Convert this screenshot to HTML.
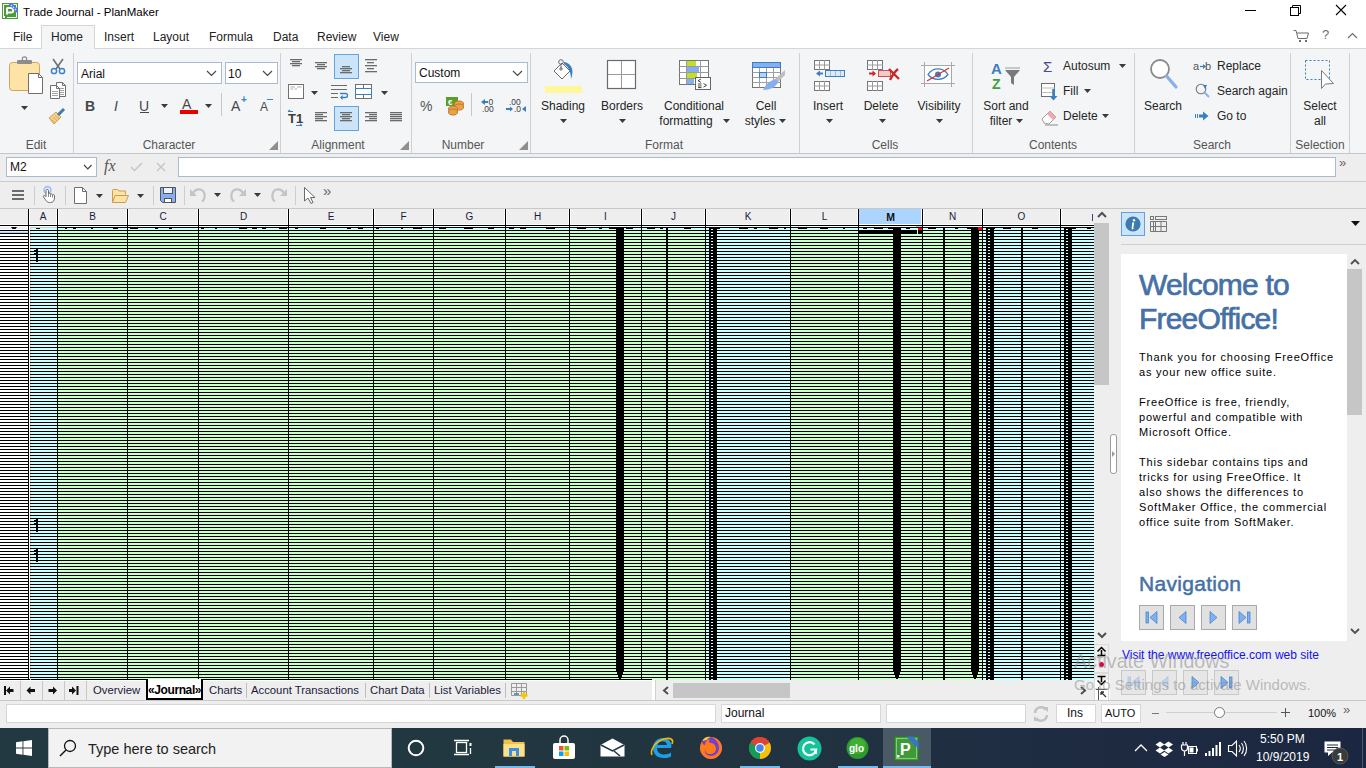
<!DOCTYPE html><html><head><meta charset="utf-8"><style>
html,body{margin:0;padding:0;width:1366px;height:768px;overflow:hidden;background:#fff;position:relative;font-family:"Liberation Sans",sans-serif;}
div{position:absolute;box-sizing:border-box;}
.t{white-space:pre;font-size:11.5px;line-height:14px;color:#222;}
svg{position:absolute;overflow:visible;}
</style></head><body>
<div style="left:0px;top:0px;width:1366px;height:25px;background:#fff"></div>
<div class="t" style="left:23px;top:5px;font-size:11.5px;color:#000">Trade Journal - PlanMaker</div>
<svg style="left:2px;top:3px" width="16" height="16" viewBox="0 0 16 16">
<rect x="0" y="0" width="16" height="16" fill="#4b9b3b"/>
<path d="M1.5 13V1.5H14.5V14.5H5" fill="none" stroke="#fff" stroke-width="1"/>
<rect x="1" y="13" width="2" height="2" fill="#fff"/>
<path d="M5 4.5V11.5M5 5H9A2 2 0 0 1 9 9.5H5.5" fill="none" stroke="#fff" stroke-width="2"/>
<path d="M5.5 0H10L16 6V11Z" fill="#4a7ce8"/>
<path d="M9 2L10 3M11 4L12 5M13 6L14 7" stroke="#dfe8ff" stroke-width="1.2"/>
</svg>
<div style="left:1245px;top:10px;width:11px;height:1px;background:#000"></div>
<svg style="left:1289px;top:4px" width="13" height="12"><rect x="1.5" y="3.5" width="8" height="8" fill="none" stroke="#000"/><path d="M3.5 3.5V1.5H11.5V9.5H9.5" fill="none" stroke="#000"/></svg>
<svg style="left:1335px;top:4px" width="12" height="12"><path d="M1 1L11 11M11 1L1 11" stroke="#000" stroke-width="1.1"/></svg>
<div style="left:0px;top:48px;width:1366px;height:1px;background:#d6d6d6"></div>
<div style="left:41px;top:25px;width:54px;height:24px;background:#f4f5f7;border:1px solid #d6d6d6;border-bottom:none"></div>
<div class="t" style="left:13px;top:30px;font-size:12px;color:#222">File</div>
<div class="t" style="left:51px;top:30px;font-size:12px;color:#222">Home</div>
<div class="t" style="left:104px;top:30px;font-size:12px;color:#222">Insert</div>
<div class="t" style="left:153px;top:30px;font-size:12px;color:#222">Layout</div>
<div class="t" style="left:209px;top:30px;font-size:12px;color:#222">Formula</div>
<div class="t" style="left:273px;top:30px;font-size:12px;color:#222">Data</div>
<div class="t" style="left:317px;top:30px;font-size:12px;color:#222">Review</div>
<div class="t" style="left:373px;top:30px;font-size:12px;color:#222">View</div>
<svg style="left:1293px;top:29px" width="18" height="15"><path d="M0.5 1.5H3L5 9.5H14L15.5 4H4" fill="none" stroke="#6d6d6d" stroke-width="1"/><rect x="6" y="11" width="2" height="2" fill="#6d6d6d"/><rect x="12" y="11" width="2" height="2" fill="#6d6d6d"/></svg>
<div class="t" style="left:1322px;top:28px;font-size:13px;color:#6d6d6d">?</div>
<svg style="left:1347px;top:32px" width="12" height="8"><path d="M1 6L5.5 1.5L10 6" fill="none" stroke="#6d6d6d" stroke-width="1.2"/></svg>
<div style="left:0px;top:49px;width:1366px;height:104px;background:#f4f5f7"></div>
<div style="left:0px;top:153px;width:1366px;height:1px;background:#c6c6c6"></div>
<div style="left:73px;top:53px;width:1px;height:100px;background:#cfd0d2"></div>
<div style="left:280px;top:53px;width:1px;height:100px;background:#cfd0d2"></div>
<div style="left:411px;top:53px;width:1px;height:100px;background:#cfd0d2"></div>
<div style="left:530px;top:53px;width:1px;height:100px;background:#cfd0d2"></div>
<div style="left:799px;top:53px;width:1px;height:100px;background:#cfd0d2"></div>
<div style="left:972px;top:53px;width:1px;height:100px;background:#cfd0d2"></div>
<div style="left:1134px;top:53px;width:1px;height:100px;background:#cfd0d2"></div>
<div style="left:1290px;top:53px;width:1px;height:100px;background:#cfd0d2"></div>
<div style="left:1349px;top:53px;width:1px;height:100px;background:#cfd0d2"></div>
<div class="t" style="left:-24px;top:138px;width:120px;text-align:center;font-size:12px;color:#555">Edit</div>
<div class="t" style="left:109px;top:138px;width:120px;text-align:center;font-size:12px;color:#555">Character</div>
<div class="t" style="left:278px;top:138px;width:120px;text-align:center;font-size:12px;color:#555">Alignment</div>
<div class="t" style="left:403px;top:138px;width:120px;text-align:center;font-size:12px;color:#555">Number</div>
<div class="t" style="left:604px;top:138px;width:120px;text-align:center;font-size:12px;color:#555">Format</div>
<div class="t" style="left:825px;top:138px;width:120px;text-align:center;font-size:12px;color:#555">Cells</div>
<div class="t" style="left:993px;top:138px;width:120px;text-align:center;font-size:12px;color:#555">Contents</div>
<div class="t" style="left:1152px;top:138px;width:120px;text-align:center;font-size:12px;color:#555">Search</div>
<div class="t" style="left:1260px;top:138px;width:120px;text-align:center;font-size:12px;color:#555">Selection</div>
<div style="left:0px;top:154px;width:1366px;height:27px;background:#eeeeee"></div>
<div style="left:0px;top:181px;width:1366px;height:1px;background:#cbcbcb"></div>
<div style="left:6px;top:157px;width:91px;height:20px;background:#fff;border:1px solid #a9bad3"></div>
<div class="t" style="left:10px;top:160px;font-size:12px;color:#111">M2</div>
<svg style="left:83px;top:164px" width="10" height="7"><path d="M1 1L4.8 5L8.6 1" fill="none" stroke="#444" stroke-width="1.1"/></svg>
<div class="t" style="left:104px;top:159px;font-family:'Liberation Serif';font-size:16px;color:#555"><i>fx</i></div>
<svg style="left:130px;top:162px" width="13" height="10"><path d="M1 5L4.5 8.5L12 1" fill="none" stroke="#c4c4c4" stroke-width="1.4"/></svg>
<svg style="left:156px;top:162px" width="10" height="10"><path d="M1 1L9 9M9 1L1 9" stroke="#c4c4c4" stroke-width="1.2"/></svg>
<div style="left:178px;top:157px;width:1158px;height:20px;background:#fff;border:1px solid #a9bad3"></div>
<div style="left:0px;top:182px;width:1366px;height:26px;background:#eeeeee"></div>
<div style="left:0px;top:208px;width:1366px;height:1px;background:#c8c8c8"></div>
<div style="left:0px;top:209px;width:1094px;height:16px;background:#eeeeee"></div>
<div style="left:0px;top:224px;width:1094px;height:1px;background:#fff"></div>
<div style="left:0px;top:225px;width:1094px;height:1px;background:#000"></div>
<div style="left:0px;top:226px;width:1094px;height:1px;background:#fff"></div>
<div style="left:0px;top:227px;width:28px;height:453px;background:repeating-linear-gradient(to bottom,#000 0px,#000 1px,#ffffff 1px,#ffffff 2px,#ffffff 2px,#ffffff 3px)"></div>
<div style="left:0px;top:226px;width:28px;height:4px;background:#fff"></div>
<div style="left:0px;top:231px;width:28px;height:1px;background:#dcebfd"></div>
<div style="left:0px;top:232px;width:28px;height:1px;background:#aad3fe"></div>
<div style="left:0px;top:227px;width:27px;height:2px;background:#eeeeee"></div>
<svg style="left:11px;top:227px" width="6" height="2"><path d="M0 0H6L4.5 2H1.5Z" fill="#000"/></svg>
<div style="left:28px;top:209px;width:1px;height:471px;background:#000"></div>
<div style="left:29px;top:209px;width:1px;height:16px;background:#fff"></div>
<div style="left:29px;top:226px;width:1px;height:454px;background:#fff"></div>
<div style="left:30px;top:227px;width:27px;height:453px;background:repeating-linear-gradient(to bottom,#000 0px,#000 1px,#ccffff 1px,#ccffff 2px,#ccffff 2px,#ccffff 3px)"></div>
<div style="left:30px;top:228px;width:27px;height:1px;background:#ccffff"></div>
<div style="left:30px;top:229px;width:27px;height:1px;background:#ccffff"></div>
<div class="t" style="left:29px;top:210px;width:28px;text-align:center;font-size:10px;color:#1a1a3a">A</div>
<div style="left:58px;top:227px;width:69px;height:453px;background:repeating-linear-gradient(to bottom,#000 0px,#000 1px,#ccffcc 1px,#ccffcc 2px,#ccffcc 2px,#ccffcc 3px)"></div>
<div style="left:58px;top:228px;width:69px;height:1px;background:#ccffff"></div>
<div style="left:58px;top:229px;width:69px;height:1px;background:#ccffff"></div>
<div style="left:57px;top:209px;width:1px;height:471px;background:#000"></div>
<div style="left:56px;top:209px;width:1px;height:15px;background:#fff"></div>
<div style="left:58px;top:209px;width:1px;height:15px;background:#fff"></div>
<div class="t" style="left:58px;top:210px;width:69px;text-align:center;font-size:10px;color:#1a1a3a">B</div>
<div style="left:128px;top:227px;width:70px;height:453px;background:repeating-linear-gradient(to bottom,#000 0px,#000 1px,#ccffcc 1px,#ccffcc 2px,#ccffcc 2px,#ccffcc 3px)"></div>
<div style="left:128px;top:228px;width:70px;height:1px;background:#ccffff"></div>
<div style="left:128px;top:229px;width:70px;height:1px;background:#ccffff"></div>
<div style="left:127px;top:209px;width:1px;height:471px;background:#000"></div>
<div style="left:126px;top:209px;width:1px;height:15px;background:#fff"></div>
<div style="left:128px;top:209px;width:1px;height:15px;background:#fff"></div>
<div class="t" style="left:128px;top:210px;width:70px;text-align:center;font-size:10px;color:#1a1a3a">C</div>
<div style="left:199px;top:227px;width:89px;height:453px;background:repeating-linear-gradient(to bottom,#000 0px,#000 1px,#ccffcc 1px,#ccffcc 2px,#ccffcc 2px,#ccffcc 3px)"></div>
<div style="left:199px;top:228px;width:89px;height:1px;background:#ccffff"></div>
<div style="left:199px;top:229px;width:89px;height:1px;background:#ccffff"></div>
<div style="left:198px;top:209px;width:1px;height:471px;background:#000"></div>
<div style="left:197px;top:209px;width:1px;height:15px;background:#fff"></div>
<div style="left:199px;top:209px;width:1px;height:15px;background:#fff"></div>
<div class="t" style="left:199px;top:210px;width:89px;text-align:center;font-size:10px;color:#1a1a3a">D</div>
<div style="left:289px;top:227px;width:84px;height:453px;background:repeating-linear-gradient(to bottom,#000 0px,#000 1px,#ccffcc 1px,#ccffcc 2px,#ccffcc 2px,#ccffcc 3px)"></div>
<div style="left:289px;top:228px;width:84px;height:1px;background:#ccffff"></div>
<div style="left:289px;top:229px;width:84px;height:1px;background:#ccffff"></div>
<div style="left:288px;top:209px;width:1px;height:471px;background:#000"></div>
<div style="left:287px;top:209px;width:1px;height:15px;background:#fff"></div>
<div style="left:289px;top:209px;width:1px;height:15px;background:#fff"></div>
<div class="t" style="left:289px;top:210px;width:84px;text-align:center;font-size:10px;color:#1a1a3a">E</div>
<div style="left:374px;top:227px;width:59px;height:453px;background:repeating-linear-gradient(to bottom,#000 0px,#000 1px,#ccffcc 1px,#ccffcc 2px,#ccffcc 2px,#ccffcc 3px)"></div>
<div style="left:374px;top:228px;width:59px;height:1px;background:#ccffff"></div>
<div style="left:374px;top:229px;width:59px;height:1px;background:#ccffff"></div>
<div style="left:373px;top:209px;width:1px;height:471px;background:#000"></div>
<div style="left:372px;top:209px;width:1px;height:15px;background:#fff"></div>
<div style="left:374px;top:209px;width:1px;height:15px;background:#fff"></div>
<div class="t" style="left:374px;top:210px;width:59px;text-align:center;font-size:10px;color:#1a1a3a">F</div>
<div style="left:434px;top:227px;width:71px;height:453px;background:repeating-linear-gradient(to bottom,#000 0px,#000 1px,#ccffcc 1px,#ccffcc 2px,#ccffcc 2px,#ccffcc 3px)"></div>
<div style="left:434px;top:228px;width:71px;height:1px;background:#ccffff"></div>
<div style="left:434px;top:229px;width:71px;height:1px;background:#ccffff"></div>
<div style="left:433px;top:209px;width:1px;height:471px;background:#000"></div>
<div style="left:432px;top:209px;width:1px;height:15px;background:#fff"></div>
<div style="left:434px;top:209px;width:1px;height:15px;background:#fff"></div>
<div class="t" style="left:434px;top:210px;width:71px;text-align:center;font-size:10px;color:#1a1a3a">G</div>
<div style="left:506px;top:227px;width:63px;height:453px;background:repeating-linear-gradient(to bottom,#000 0px,#000 1px,#ccffcc 1px,#ccffcc 2px,#ccffcc 2px,#ccffcc 3px)"></div>
<div style="left:506px;top:228px;width:63px;height:1px;background:#ccffff"></div>
<div style="left:506px;top:229px;width:63px;height:1px;background:#ccffff"></div>
<div style="left:505px;top:209px;width:1px;height:471px;background:#000"></div>
<div style="left:504px;top:209px;width:1px;height:15px;background:#fff"></div>
<div style="left:506px;top:209px;width:1px;height:15px;background:#fff"></div>
<div class="t" style="left:506px;top:210px;width:63px;text-align:center;font-size:10px;color:#1a1a3a">H</div>
<div style="left:570px;top:227px;width:71px;height:453px;background:repeating-linear-gradient(to bottom,#000 0px,#000 1px,#ccffcc 1px,#ccffcc 2px,#ccffcc 2px,#ccffcc 3px)"></div>
<div style="left:570px;top:228px;width:71px;height:1px;background:#ccffff"></div>
<div style="left:570px;top:229px;width:71px;height:1px;background:#ccffff"></div>
<div style="left:569px;top:209px;width:1px;height:471px;background:#000"></div>
<div style="left:568px;top:209px;width:1px;height:15px;background:#fff"></div>
<div style="left:570px;top:209px;width:1px;height:15px;background:#fff"></div>
<div class="t" style="left:570px;top:210px;width:71px;text-align:center;font-size:10px;color:#1a1a3a">I</div>
<div style="left:642px;top:227px;width:63px;height:453px;background:repeating-linear-gradient(to bottom,#000 0px,#000 1px,#ccffcc 1px,#ccffcc 2px,#ccffcc 2px,#ccffcc 3px)"></div>
<div style="left:642px;top:228px;width:63px;height:1px;background:#ccffff"></div>
<div style="left:642px;top:229px;width:63px;height:1px;background:#ccffff"></div>
<div style="left:641px;top:209px;width:1px;height:471px;background:#000"></div>
<div style="left:640px;top:209px;width:1px;height:15px;background:#fff"></div>
<div style="left:642px;top:209px;width:1px;height:15px;background:#fff"></div>
<div class="t" style="left:642px;top:210px;width:63px;text-align:center;font-size:10px;color:#1a1a3a">J</div>
<div style="left:706px;top:227px;width:84px;height:453px;background:repeating-linear-gradient(to bottom,#000 0px,#000 1px,#ccffff 1px,#ccffff 2px,#ccffff 2px,#ccffff 3px)"></div>
<div style="left:706px;top:228px;width:84px;height:1px;background:#ccffff"></div>
<div style="left:706px;top:229px;width:84px;height:1px;background:#ccffff"></div>
<div style="left:705px;top:209px;width:1px;height:471px;background:#000"></div>
<div style="left:704px;top:209px;width:1px;height:15px;background:#fff"></div>
<div style="left:706px;top:209px;width:1px;height:15px;background:#fff"></div>
<div class="t" style="left:706px;top:210px;width:84px;text-align:center;font-size:10px;color:#1a1a3a">K</div>
<div style="left:791px;top:227px;width:67px;height:453px;background:repeating-linear-gradient(to bottom,#000 0px,#000 1px,#ccffcc 1px,#ccffcc 2px,#ccffcc 2px,#ccffcc 3px)"></div>
<div style="left:791px;top:228px;width:67px;height:1px;background:#ccffff"></div>
<div style="left:791px;top:229px;width:67px;height:1px;background:#ccffff"></div>
<div style="left:790px;top:209px;width:1px;height:471px;background:#000"></div>
<div style="left:789px;top:209px;width:1px;height:15px;background:#fff"></div>
<div style="left:791px;top:209px;width:1px;height:15px;background:#fff"></div>
<div class="t" style="left:791px;top:210px;width:67px;text-align:center;font-size:10px;color:#1a1a3a">L</div>
<div style="left:859px;top:227px;width:63px;height:453px;background:repeating-linear-gradient(to bottom,#000 0px,#000 1px,#ccffcc 1px,#ccffcc 2px,#ccffcc 2px,#ccffcc 3px)"></div>
<div style="left:859px;top:228px;width:63px;height:1px;background:#ccffff"></div>
<div style="left:859px;top:229px;width:63px;height:1px;background:#ccffff"></div>
<div style="left:858px;top:209px;width:1px;height:471px;background:#000"></div>
<div style="left:857px;top:209px;width:1px;height:15px;background:#fff"></div>
<div style="left:859px;top:209px;width:1px;height:15px;background:#fff"></div>
<div style="left:859px;top:209px;width:63px;height:15px;background:#abd5fe"></div>
<div class="t" style="left:859px;top:210px;width:63px;text-align:center;font-size:10.5px;font-weight:bold;color:#111">M</div>
<div style="left:923px;top:227px;width:59px;height:453px;background:repeating-linear-gradient(to bottom,#000 0px,#000 1px,#ccffcc 1px,#ccffcc 2px,#ccffcc 2px,#ccffcc 3px)"></div>
<div style="left:923px;top:228px;width:59px;height:1px;background:#ccffff"></div>
<div style="left:923px;top:229px;width:59px;height:1px;background:#ccffff"></div>
<div style="left:922px;top:209px;width:1px;height:471px;background:#000"></div>
<div style="left:921px;top:209px;width:1px;height:15px;background:#fff"></div>
<div style="left:923px;top:209px;width:1px;height:15px;background:#fff"></div>
<div class="t" style="left:923px;top:210px;width:59px;text-align:center;font-size:10px;color:#1a1a3a">N</div>
<div style="left:983px;top:227px;width:77px;height:453px;background:repeating-linear-gradient(to bottom,#000 0px,#000 1px,#ccffff 1px,#ccffff 2px,#ccffff 2px,#ccffff 3px)"></div>
<div style="left:983px;top:228px;width:77px;height:1px;background:#ccffff"></div>
<div style="left:983px;top:229px;width:77px;height:1px;background:#ccffff"></div>
<div style="left:982px;top:209px;width:1px;height:471px;background:#000"></div>
<div style="left:981px;top:209px;width:1px;height:15px;background:#fff"></div>
<div style="left:983px;top:209px;width:1px;height:15px;background:#fff"></div>
<div class="t" style="left:983px;top:210px;width:77px;text-align:center;font-size:10px;color:#1a1a3a">O</div>
<div style="left:1061px;top:227px;width:33px;height:453px;background:repeating-linear-gradient(to bottom,#000 0px,#000 1px,#ccffff 1px,#ccffff 2px,#ccffff 2px,#ccffff 3px)"></div>
<div style="left:1061px;top:228px;width:33px;height:1px;background:#ccffff"></div>
<div style="left:1061px;top:229px;width:33px;height:1px;background:#ccffff"></div>
<div style="left:1060px;top:209px;width:1px;height:471px;background:#000"></div>
<div style="left:1059px;top:209px;width:1px;height:15px;background:#fff"></div>
<div style="left:1061px;top:209px;width:1px;height:15px;background:#fff"></div>
<div style="left:1092px;top:214px;width:1px;height:7px;background:#553388"></div>
<div style="left:0px;top:679px;width:652px;height:1px;background:#000"></div>
<div style="left:0px;top:680px;width:652px;height:1px;background:#fff"></div>
<div style="left:616px;top:227px;width:8px;height:445px;background:#000"></div>
<div style="left:617px;top:672px;width:6px;height:2px;background:#000"></div>
<div style="left:618px;top:675px;width:4px;height:2px;background:#000"></div>
<div style="left:619px;top:678px;width:2px;height:1px;background:#000"></div>
<div style="left:893px;top:227px;width:8px;height:445px;background:#000"></div>
<div style="left:894px;top:672px;width:6px;height:2px;background:#000"></div>
<div style="left:895px;top:675px;width:4px;height:2px;background:#000"></div>
<div style="left:896px;top:678px;width:2px;height:1px;background:#000"></div>
<div style="left:971px;top:227px;width:8px;height:445px;background:#000"></div>
<div style="left:972px;top:672px;width:6px;height:2px;background:#000"></div>
<div style="left:973px;top:675px;width:4px;height:2px;background:#000"></div>
<div style="left:974px;top:678px;width:2px;height:1px;background:#000"></div>
<div style="left:666px;top:227px;width:2px;height:453px;background:#000"></div>
<div style="left:943px;top:227px;width:2px;height:453px;background:#000"></div>
<div style="left:1021px;top:227px;width:2px;height:453px;background:#000"></div>
<div style="left:709px;top:227px;width:8px;height:453px;background:#000"></div>
<div style="left:711px;top:227px;width:2px;height:453px;background:repeating-linear-gradient(to bottom,#000 0px,#000 2px,#ccffff 2px,#ccffff 3px)"></div>
<div style="left:986px;top:227px;width:8px;height:453px;background:#000"></div>
<div style="left:988px;top:227px;width:2px;height:453px;background:repeating-linear-gradient(to bottom,#000 0px,#000 2px,#ccffff 2px,#ccffff 3px)"></div>
<div style="left:1064px;top:227px;width:8px;height:453px;background:#000"></div>
<div style="left:1066px;top:227px;width:2px;height:453px;background:repeating-linear-gradient(to bottom,#000 0px,#000 2px,#ccffff 2px,#ccffff 3px)"></div>
<div style="left:30px;top:227px;width:27px;height:1px;background:#c8c8c8"></div>
<div style="left:36px;top:228px;width:4px;height:1px;background:#000"></div>
<div style="left:65px;top:228px;width:2px;height:1px;background:#000"></div>
<div style="left:73px;top:228px;width:3px;height:1px;background:#000"></div>
<div style="left:91px;top:228px;width:2px;height:1px;background:#000"></div>
<div style="left:113px;top:228px;width:5px;height:1px;background:#000"></div>
<div style="left:130px;top:228px;width:8px;height:1px;background:#000"></div>
<div style="left:155px;top:228px;width:3px;height:1px;background:#000"></div>
<div style="left:169px;top:228px;width:3px;height:1px;background:#000"></div>
<div style="left:201px;top:228px;width:3px;height:1px;background:#000"></div>
<div style="left:215px;top:228px;width:2px;height:1px;background:#000"></div>
<div style="left:239px;top:228px;width:8px;height:1px;background:#000"></div>
<div style="left:252px;top:228px;width:5px;height:1px;background:#000"></div>
<div style="left:262px;top:228px;width:4px;height:1px;background:#000"></div>
<div style="left:279px;top:228px;width:8px;height:1px;background:#000"></div>
<div style="left:295px;top:228px;width:3px;height:1px;background:#000"></div>
<div style="left:320px;top:228px;width:6px;height:1px;background:#000"></div>
<div style="left:347px;top:228px;width:4px;height:1px;background:#000"></div>
<div style="left:358px;top:228px;width:5px;height:1px;background:#000"></div>
<div style="left:376px;top:228px;width:3px;height:1px;background:#000"></div>
<div style="left:401px;top:228px;width:2px;height:1px;background:#000"></div>
<div style="left:413px;top:228px;width:9px;height:1px;background:#000"></div>
<div style="left:439px;top:228px;width:7px;height:1px;background:#000"></div>
<div style="left:464px;top:228px;width:9px;height:1px;background:#000"></div>
<div style="left:488px;top:228px;width:6px;height:1px;background:#000"></div>
<div style="left:509px;top:228px;width:5px;height:1px;background:#000"></div>
<div style="left:520px;top:228px;width:6px;height:1px;background:#000"></div>
<div style="left:546px;top:228px;width:9px;height:1px;background:#000"></div>
<div style="left:577px;top:228px;width:9px;height:1px;background:#000"></div>
<div style="left:599px;top:228px;width:3px;height:1px;background:#000"></div>
<div style="left:609px;top:228px;width:8px;height:1px;background:#000"></div>
<div style="left:626px;top:228px;width:7px;height:1px;background:#000"></div>
<div style="left:647px;top:228px;width:8px;height:1px;background:#000"></div>
<div style="left:660px;top:228px;width:3px;height:1px;background:#000"></div>
<div style="left:684px;top:228px;width:7px;height:1px;background:#000"></div>
<div style="left:713px;top:228px;width:7px;height:1px;background:#000"></div>
<div style="left:739px;top:228px;width:9px;height:1px;background:#000"></div>
<div style="left:754px;top:228px;width:3px;height:1px;background:#000"></div>
<div style="left:769px;top:228px;width:9px;height:1px;background:#000"></div>
<div style="left:784px;top:228px;width:2px;height:1px;background:#000"></div>
<div style="left:798px;top:228px;width:9px;height:1px;background:#000"></div>
<div style="left:820px;top:228px;width:8px;height:1px;background:#000"></div>
<div style="left:843px;top:228px;width:2px;height:1px;background:#000"></div>
<div style="left:863px;top:228px;width:4px;height:1px;background:#000"></div>
<div style="left:874px;top:228px;width:9px;height:1px;background:#000"></div>
<div style="left:888px;top:228px;width:5px;height:1px;background:#000"></div>
<div style="left:906px;top:228px;width:4px;height:1px;background:#000"></div>
<div style="left:928px;top:228px;width:8px;height:1px;background:#000"></div>
<div style="left:955px;top:228px;width:3px;height:1px;background:#000"></div>
<div style="left:967px;top:228px;width:9px;height:1px;background:#000"></div>
<div style="left:989px;top:228px;width:6px;height:1px;background:#000"></div>
<div style="left:1003px;top:228px;width:8px;height:1px;background:#000"></div>
<div style="left:1032px;top:228px;width:6px;height:1px;background:#000"></div>
<div style="left:1068px;top:228px;width:8px;height:1px;background:#000"></div>
<div style="left:1087px;top:228px;width:4px;height:1px;background:#000"></div>
<div style="left:30px;top:227px;width:1px;height:453px;background:repeating-linear-gradient(to bottom,#000 0px,#000 1px,#d6d0d0 1px,#d6d0d0 2px,#d6d0d0 2px,#d6d0d0 3px)"></div>
<div style="left:30px;top:227px;width:27px;height:1px;background:#c8c8c8"></div>
<div style="left:36px;top:248px;width:2px;height:14px;background:#000"></div>
<div style="left:34px;top:250px;width:2px;height:1px;background:#000"></div>
<div style="left:34px;top:253px;width:2px;height:1px;background:#000"></div>
<div style="left:36px;top:518px;width:2px;height:14px;background:#000"></div>
<div style="left:34px;top:520px;width:2px;height:1px;background:#000"></div>
<div style="left:34px;top:523px;width:2px;height:1px;background:#000"></div>
<div style="left:36px;top:548px;width:2px;height:14px;background:#000"></div>
<div style="left:34px;top:550px;width:2px;height:1px;background:#000"></div>
<div style="left:34px;top:553px;width:2px;height:1px;background:#000"></div>
<div style="left:859px;top:230px;width:59px;height:4px;background:#000"></div>
<div style="left:918px;top:230px;width:4px;height:4px;background:#000"></div>
<div style="left:918px;top:228px;width:4px;height:2px;background:#ff0000"></div>
<div style="left:917px;top:230px;width:1px;height:4px;background:#ccffcc"></div>
<div style="left:916px;top:226px;width:6px;height:1px;background:#cccccc"></div>
<div style="left:978px;top:227px;width:4px;height:3px;background:#ff0000"></div>
<div style="left:1094px;top:209px;width:16px;height:471px;background:#eeeeee"></div>
<svg style="left:1097px;top:211px" width="10" height="7"><path d="M1 6L5 2L9 6" fill="none" stroke="#505050" stroke-width="2"/></svg>
<div style="left:1094px;top:223px;width:15px;height:162px;background:#c6c6c6"></div>
<svg style="left:1097px;top:632px" width="10" height="7"><path d="M1 1L5 5L9 1" fill="none" stroke="#505050" stroke-width="2"/></svg>
<div style="left:1094px;top:644px;width:15px;height:13px;border:1px solid #dadada"></div>
<div style="left:1094px;top:657px;width:15px;height:16px;border:1px solid #dadada"></div>
<div style="left:1094px;top:673px;width:15px;height:16px;border:1px solid #dadada"></div>
<div style="left:1094px;top:689px;width:15px;height:12px;border:1px solid #dadada"></div>
<svg style="left:1097px;top:647px" width="9" height="9"><path d="M0.5 4.5L4.5 0.5L8.5 4.5M0.5 8.5H8.5M4.5 3V8" fill="none" stroke="#000" stroke-width="1.5"/></svg>
<div style="left:1099px;top:662px;width:5px;height:5px;background:#e0004a;border-radius:3px"></div>
<svg style="left:1097px;top:676px" width="9" height="9"><path d="M0.5 0.5H8.5M0.5 4.5L4.5 8.5L8.5 4.5M4.5 1V6" fill="none" stroke="#000" stroke-width="1.5"/></svg>
<svg style="left:1096px;top:687px" width="12" height="14"><path d="M2.5 0V13M0 2.5H11" stroke="#555" stroke-width="1"/><path d="M5 5L10 10M5 5V8M5 5H8" stroke="#333" stroke-width="1.3" fill="none"/></svg>
<div style="left:1110px;top:209px;width:256px;height:491px;background:#eeeeee"></div>
<div style="left:1121px;top:212px;width:24px;height:24px;background:#cce4f7;border:1px solid #5ea0e3"></div>
<svg style="left:1125px;top:216px" width="16" height="16"><circle cx="8" cy="8" r="7.6" fill="#3b7bb0"/><path d="M7.2 6.5H9.3L8.2 12.2C8.1 12.8 8.6 12.8 9.4 12.2L9.5 12.6C8.5 13.6 6.4 14 6.7 12.3Z" fill="#fff"/><circle cx="9" cy="4.3" r="1.2" fill="#fff"/></svg>
<svg style="left:1150px;top:216px" width="18" height="17"><rect x="0.5" y="0.5" width="3" height="3" fill="none" stroke="#777"/><rect x="5.5" y="0.5" width="11" height="3" fill="none" stroke="#777"/><path d="M0.5 5.5H16.5V15.5H0.5ZM5.5 5.5V15.5M11 5.5V15.5M0.5 10.5H16.5M3.5 5.5V15.5" fill="none" stroke="#777"/></svg>
<svg style="left:1351px;top:221px" width="10" height="6"><path d="M0 0H9L4.5 5Z" fill="#111"/></svg>
<div style="left:1121px;top:244px;width:245px;height:1px;background:#d0d0d0"></div>
<div style="left:1121px;top:254px;width:241px;height:387px;background:#fff"></div>
<div style="left:1347px;top:254px;width:15px;height:387px;background:#eeeeee"></div>
<svg style="left:1350px;top:258px" width="10" height="7"><path d="M1 6L5 2L9 6" fill="none" stroke="#505050" stroke-width="1.8"/></svg>
<div style="left:1347px;top:269px;width:15px;height:146px;background:#c6c6c6"></div>
<svg style="left:1350px;top:628px" width="10" height="7"><path d="M1 1L5 5L9 1" fill="none" stroke="#505050" stroke-width="1.8"/></svg>
<div style="left:1110px;top:434px;width:7px;height:40px;border:1px solid #9a9a9a;border-radius:3px;background:#fff"></div>
<svg style="left:1112px;top:451px" width="4" height="6"><path d="M0 0L3 3L0 6Z" fill="#999"/></svg>
<div class="t" style="left:1139px;top:268px;font-size:30px;line-height:34px;letter-spacing:-0.8px;-webkit-text-stroke:0.7px #4571a6;color:#4571a6">Welcome to<br>FreeOffice!</div>
<div class="t" style="left:1139px;top:350px;font-size:11px;line-height:15px;letter-spacing:0.8px;color:#000">Thank you for choosing FreeOffice<br>as your new office suite.</div>
<div class="t" style="left:1139px;top:395px;font-size:11px;line-height:15px;letter-spacing:0.8px;color:#000">FreeOffice is free, friendly,<br>powerful and compatible with<br>Microsoft Office.</div>
<div class="t" style="left:1139px;top:455px;font-size:11px;line-height:15px;letter-spacing:0.8px;color:#000">This sidebar contains tips and<br>tricks for using FreeOffice. It<br>also shows the differences to<br>SoftMaker Office, the commercial<br>office suite from SoftMaker.</div>
<div class="t" style="left:1139px;top:571px;font-size:21px;line-height:25px;letter-spacing:0.3px;-webkit-text-stroke:0.5px #4571a6;color:#4571a6">Navigation</div>
<div style="left:1139px;top:605px;width:25px;height:25px;background:#e1e1e1;border:1px solid #a9a9a9"></div>
<div style="left:1170px;top:605px;width:25px;height:25px;background:#e1e1e1;border:1px solid #a9a9a9"></div>
<div style="left:1201px;top:605px;width:25px;height:25px;background:#e1e1e1;border:1px solid #a9a9a9"></div>
<div style="left:1232px;top:605px;width:25px;height:25px;background:#e1e1e1;border:1px solid #a9a9a9"></div>
<svg style="left:1139px;top:605px;opacity:1" width="25" height="25"><rect x="7" y="7" width="2.5" height="11" fill="#7fb0f0" stroke="#3e7cc9" stroke-width="0.7"/><path d="M18 6.5V18.5L11 12.5Z" fill="#7fb0f0" stroke="#3e7cc9" stroke-width="0.7"/></svg>
<svg style="left:1170px;top:605px;opacity:1" width="25" height="25"><path d="M16 6.5V18.5L9 12.5Z" fill="#7fb0f0" stroke="#3e7cc9" stroke-width="0.7"/></svg>
<svg style="left:1201px;top:605px" width="25" height="25"><path d="M9 6.5V18.5L16 12.5Z" fill="#7fb0f0" stroke="#3e7cc9" stroke-width="0.7"/></svg>
<svg style="left:1232px;top:605px" width="25" height="25"><path d="M7 6.5V18.5L14 12.5Z" fill="#7fb0f0" stroke="#3e7cc9" stroke-width="0.7"/><rect x="15.5" y="7" width="2.5" height="11" fill="#7fb0f0" stroke="#3e7cc9" stroke-width="0.7"/></svg>
<div class="t" style="left:1122px;top:648px;font-size:12px;line-height:14px;color:#1010f8">Visit the www.freeoffice.com web site</div>
<div style="left:1121px;top:670px;width:25px;height:25px;background:#e6e6e6;border:1px solid #c8c8c8"></div>
<div style="left:1152px;top:670px;width:25px;height:25px;background:#e6e6e6;border:1px solid #c8c8c8"></div>
<div style="left:1183px;top:670px;width:25px;height:25px;background:#e6e6e6;border:1px solid #c8c8c8"></div>
<div style="left:1214px;top:670px;width:25px;height:25px;background:#e6e6e6;border:1px solid #c8c8c8"></div>
<svg style="left:1121px;top:670px;opacity:0.35" width="25" height="25"><rect x="7" y="7" width="2.5" height="11" fill="#7fb0f0" stroke="#3e7cc9" stroke-width="0.7"/><path d="M18 6.5V18.5L11 12.5Z" fill="#7fb0f0" stroke="#3e7cc9" stroke-width="0.7"/></svg>
<svg style="left:1152px;top:670px;opacity:0.35" width="25" height="25"><path d="M16 6.5V18.5L9 12.5Z" fill="#7fb0f0" stroke="#3e7cc9" stroke-width="0.7"/></svg>
<svg style="left:1183px;top:670px" width="25" height="25"><path d="M9 6.5V18.5L16 12.5Z" fill="#7fb0f0" stroke="#3e7cc9" stroke-width="0.7"/></svg>
<svg style="left:1214px;top:670px" width="25" height="25"><path d="M7 6.5V18.5L14 12.5Z" fill="#7fb0f0" stroke="#3e7cc9" stroke-width="0.7"/><rect x="15.5" y="7" width="2.5" height="11" fill="#7fb0f0" stroke="#3e7cc9" stroke-width="0.7"/></svg>
<div style="left:0px;top:681px;width:1094px;height:19px;background:#eeeeee"></div>
<div style="left:0px;top:700px;width:1366px;height:1px;background:#c9c9c9"></div>
<div style="left:20px;top:681px;width:1px;height:19px;background:#c8c8c8"></div>
<div style="left:42px;top:681px;width:1px;height:19px;background:#c8c8c8"></div>
<div style="left:64px;top:681px;width:1px;height:19px;background:#c8c8c8"></div>
<div style="left:86px;top:681px;width:1px;height:19px;background:#c8c8c8"></div>
<svg style="left:4px;top:686px" width="10" height="9"><rect x="0" y="0" width="2" height="9" fill="#111"/><path d="M2 4.5L6 0.5V3H9.5V6H6V8.5Z" fill="#111"/></svg>
<svg style="left:26px;top:686px" width="10" height="9"><path d="M0.5 4.5L4.5 0.5V3H9V6H4.5V8.5Z" fill="#111"/></svg>
<svg style="left:48px;top:686px" width="10" height="9"><path d="M9 4.5L5 0.5V3H0.5V6H5V8.5Z" fill="#111"/></svg>
<svg style="left:69px;top:686px" width="10" height="9"><path d="M7 4.5L3 0.5V3H0V6H3V8.5Z" fill="#111"/><rect x="7.5" y="0" width="2" height="9" fill="#111"/></svg>
<div class="t" style="left:93px;top:683px;font-size:11.3px;line-height:14px;color:#1a1a3a">Overview</div>
<div style="left:146px;top:679px;width:57px;height:21px;background:#fff;border:2px solid #000;border-top:none"></div>
<div class="t" style="left:148px;top:683px;font-size:12px;line-height:14px;font-weight:bold;color:#000;letter-spacing:-0.4px">«Journal»</div>
<div class="t" style="left:209px;top:683px;font-size:11.3px;line-height:14px;color:#1a1a3a">Charts</div>
<div style="left:246px;top:683px;width:1px;height:15px;background:#bdbdbd"></div>
<div class="t" style="left:251px;top:683px;font-size:11.3px;line-height:14px;color:#1a1a3a">Account Transactions</div>
<div style="left:365px;top:683px;width:1px;height:15px;background:#bdbdbd"></div>
<div class="t" style="left:370px;top:683px;font-size:11.3px;line-height:14px;color:#1a1a3a">Chart Data</div>
<div style="left:429px;top:683px;width:1px;height:15px;background:#bdbdbd"></div>
<div class="t" style="left:434px;top:683px;font-size:11.3px;line-height:14px;color:#1a1a3a">List Variables</div>
<div style="left:505px;top:683px;width:1px;height:15px;background:#bdbdbd"></div>
<svg style="left:511px;top:683px" width="18" height="17"><path d="M0.5 0.5H15.5V12.5H0.5ZM0.5 4.5H15.5M0.5 8.5H15.5M5.5 0.5V12.5M10.5 0.5V12.5" fill="none" stroke="#9a9a9a"/><path d="M3 11H8" stroke="#3a7fc6" stroke-width="1.5"/><path d="M13 9V16M9.5 12.5H16.5" stroke="#f7c400" stroke-width="2.5"/></svg>
<div style="left:652px;top:680px;width:3px;height:20px;background:#fff"></div>
<div style="left:655px;top:680px;width:1px;height:20px;background:#d0d0d0"></div>
<div style="left:656px;top:680px;width:438px;height:20px;background:#eeeeee"></div>
<svg style="left:662px;top:686px" width="8" height="9"><path d="M6 1L2 4.5L6 8" fill="none" stroke="#505050" stroke-width="2"/></svg>
<div style="left:673px;top:683px;width:117px;height:15px;background:#c6c6c6"></div>
<svg style="left:1079px;top:686px" width="8" height="9"><path d="M2 1L6 4.5L2 8" fill="none" stroke="#505050" stroke-width="2"/></svg>
<div style="left:0px;top:701px;width:1366px;height:27px;background:#eeeeee"></div>
<div style="left:6px;top:704px;width:710px;height:19px;background:#fff;border:1px solid #d7d7d7"></div>
<div style="left:721px;top:704px;width:160px;height:19px;background:#fff;border:1px solid #d7d7d7"></div>
<div style="left:886px;top:704px;width:140px;height:19px;background:#fff;border:1px solid #d7d7d7"></div>
<div style="left:1056px;top:704px;width:40px;height:19px;background:#fff;border:1px solid #d7d7d7"></div>
<div style="left:1101px;top:704px;width:40px;height:19px;background:#fff;border:1px solid #d7d7d7"></div>
<div class="t" style="left:725px;top:706px;font-size:12px;color:#111">Journal</div>
<div class="t" style="left:1067px;top:706px;font-size:12px;color:#111">Ins</div>
<div class="t" style="left:1105px;top:706px;font-size:11px;color:#111">AUTO</div>
<svg style="left:1032px;top:705px" width="18" height="18"><path d="M3 8A6 6 0 0 1 14 5" fill="none" stroke="#c3c3c3" stroke-width="2.5"/><path d="M15 10A6 6 0 0 1 4 13" fill="none" stroke="#c3c3c3" stroke-width="2.5"/><path d="M11 2H16V7Z M7 16H2V11Z" fill="#c3c3c3"/></svg>
<div style="left:1152px;top:713px;width:7px;height:1px;background:#777"></div>
<div style="left:1166px;top:712px;width:111px;height:1px;background:#cfcfcf"></div>
<div style="left:1214px;top:707px;width:11px;height:11px;background:#fff;border:1px solid #777;border-radius:6px"></div>
<svg style="left:1281px;top:708px" width="10" height="10"><path d="M0 4.5H9M4.5 0V9" stroke="#555" stroke-width="1"/></svg>
<div class="t" style="left:1308px;top:706px;font-size:11px;color:#111">100%</div>
<div style="left:0px;top:728px;width:1366px;height:40px;background:linear-gradient(to right,#233942 0%,#223841 32%,#21343f 53%,#1f2e42 72%,#1e2b41 80%,#1b2740 100%)"></div>
<svg style="left:16px;top:740px" width="16" height="16"><path d="M0 2.2L6.5 1.3V7.5H0Z M7.4 1.2L16 0V7.5H7.4Z M0 8.4H6.5V14.7L0 13.8Z M7.4 8.4H16V16L7.4 14.8Z" fill="#fff"/></svg>
<div style="left:48px;top:728px;width:344px;height:40px;background:#f2f2f2;border:1px solid #b8b8b8"></div>
<svg style="left:59px;top:739px" width="18" height="18"><circle cx="11" cy="7" r="5.5" fill="none" stroke="#111" stroke-width="1.3"/><path d="M7 11L1 17" stroke="#111" stroke-width="1.4"/></svg>
<div class="t" style="left:88px;top:741px;font-size:14.5px;line-height:17px;color:#222">Type here to search</div>
<svg style="left:8px;top:56px;" width="36" height="40" viewBox="0 0 36 40"><rect x="1.5" y="6.5" width="30" height="28" rx="3" fill="#fde3a6" stroke="#d8a058"/><rect x="9" y="4" width="15" height="4" rx="1" fill="#8d8d8d"/><circle cx="16.5" cy="3" r="2.2" fill="none" stroke="#8d8d8d" stroke-width="1.2"/><path d="M20.5 17.5H30.5L34.5 21.5V37.5H20.5Z" fill="#fff" stroke="#6f6f6f"/><path d="M30.5 17.5V21.5H34.5" fill="none" stroke="#6f6f6f"/></svg>
<svg style="left:21px;top:106px;" width="8" height="5" viewBox="0 0 8 5"><path d="M0 0H7L3.5 4Z" fill="#3a3a3a"/></svg>
<svg style="left:50px;top:58px;" width="16" height="17" viewBox="0 0 16 17"><path d="M3 1L10 11M13 1L6 11" stroke="#707070" stroke-width="1.6"/><circle cx="4" cy="13" r="2.6" fill="none" stroke="#3e84c4" stroke-width="1.5"/><circle cx="12" cy="13" r="2.6" fill="none" stroke="#3e84c4" stroke-width="1.5"/></svg>
<svg style="left:49px;top:82px;" width="18" height="18" viewBox="0 0 18 18"><path d="M7.5 0.5H13.5L16.5 3.5V14.5H7.5Z" fill="#fff" stroke="#6f6f6f"/><path d="M13.5 0.5V3.5H16.5" fill="none" stroke="#6f6f6f"/><path d="M10 6.5H15M10 8.5H15M10 10.5H15M10 12.5H15" stroke="#8a8a8a" stroke-width="0.8"/><path d="M1.5 3.5H7.5L10.5 6.5V16.5H1.5Z" fill="#fff" stroke="#6f6f6f"/><path d="M7.5 3.5V6.5H10.5" fill="none" stroke="#6f6f6f"/><path d="M3 9.5H9M3 11.5H9M3 13.5H9" stroke="#8a8a8a" stroke-width="0.8"/></svg>
<svg style="left:48px;top:107px;" width="18" height="19" viewBox="0 0 18 19"><path d="M1 11L8 5L13 10L6 17Z" fill="#f5d08a" stroke="#d3a05a"/><path d="M3 12.5L8 16M5 10.5L10 14M7 8.5L11.5 12" stroke="#d3a05a" stroke-width="0.8"/><path d="M10 8L16 2" stroke="#3e7cb4" stroke-width="3"/></svg>
<div style="left:77px;top:62px;width:145px;height:22px;background:#fff;border:1px solid #a9bad3"></div>
<div class="t" style="left:81px;top:66.8px;font-size:12px;line-height:14px;color:#111">Arial</div>
<svg style="left:206px;top:70px;" width="11" height="7" viewBox="0 0 11 7"><path d="M1 1L5.5 5.5L10 1" fill="none" stroke="#444" stroke-width="1.1"/></svg>
<div style="left:225px;top:62px;width:53px;height:22px;background:#fff;border:1px solid #a9bad3"></div>
<div class="t" style="left:228px;top:66.8px;font-size:12px;line-height:14px;color:#111">10</div>
<svg style="left:262px;top:70px;" width="11" height="7" viewBox="0 0 11 7"><path d="M1 1L5.5 5.5L10 1" fill="none" stroke="#444" stroke-width="1.1"/></svg>
<div class="t" style="left:85px;top:97.6px;font-size:14px;line-height:17px;font-weight:bold;color:#474747">B</div>
<div class="t" style="left:114px;top:97.6px;font-size:14px;line-height:17px;font-style:italic;color:#474747;font-family:'Liberation Sans'">I</div>
<div class="t" style="left:139px;top:97.6px;font-size:14px;line-height:17px;color:#474747">U</div>
<div style="left:140px;top:112px;width:9px;height:1px;background:#474747"></div>
<svg style="left:161px;top:104px;" width="8" height="5" viewBox="0 0 8 5"><path d="M0 0H7L3.5 4Z" fill="#3a3a3a"/></svg>
<div class="t" style="left:182px;top:95.6px;font-size:14px;line-height:17px;color:#474747">A</div>
<div style="left:180px;top:110px;width:18px;height:4px;background:#e60000"></div>
<svg style="left:205px;top:104px;" width="8" height="5" viewBox="0 0 8 5"><path d="M0 0H7L3.5 4Z" fill="#3a3a3a"/></svg>
<div style="left:221px;top:93px;width:1px;height:23px;background:#c8c8c8"></div>
<div class="t" style="left:231px;top:97.6px;font-size:14px;line-height:17px;color:#474747">A</div>
<div class="t" style="left:241px;top:93.5px;font-size:10px;line-height:12px;color:#3b83c5;font-weight:bold">+</div>
<div class="t" style="left:260px;top:99.8px;font-size:12px;line-height:14px;color:#474747">A</div>
<div style="left:267px;top:99px;width:6px;height:1px;background:#3b83c5"></div>
<svg style="left:269px;top:141px;" width="10" height="10" viewBox="0 0 10 10"><path d="M9 0V9H0Z" fill="#8f8f8f"/></svg>
<div style="left:334px;top:54px;width:25px;height:25px;background:#cce4f7;border:1px solid #62a3e4"></div>
<div style="left:334px;top:106px;width:25px;height:25px;background:#cce4f7;border:1px solid #62a3e4"></div>
<svg style="left:289px;top:59px;" width="14" height="16" viewBox="0 0 14 16"><rect x="1" y="0" width="12" height="1.3" fill="#6b6b6b"/><rect x="3" y="2" width="8" height="1.3" fill="#6b6b6b"/><rect x="1" y="4" width="12" height="1.3" fill="#6b6b6b"/><rect x="3" y="6" width="8" height="1.3" fill="#6b6b6b"/></svg>
<svg style="left:314px;top:62px;" width="14" height="16" viewBox="0 0 14 16"><rect x="1" y="0" width="12" height="1.3" fill="#6b6b6b"/><rect x="3" y="2" width="8" height="1.3" fill="#6b6b6b"/><rect x="1" y="4" width="12" height="1.3" fill="#6b6b6b"/><rect x="3" y="6" width="8" height="1.3" fill="#6b6b6b"/></svg>
<svg style="left:339px;top:66px;" width="14" height="16" viewBox="0 0 14 16"><rect x="3" y="0" width="8" height="1.3" fill="#6b6b6b"/><rect x="1" y="2" width="12" height="1.3" fill="#6b6b6b"/><rect x="3" y="4" width="8" height="1.3" fill="#6b6b6b"/><rect x="1" y="6" width="12" height="1.3" fill="#6b6b6b"/></svg>
<svg style="left:364px;top:59px;" width="14" height="16" viewBox="0 0 14 16"><rect x="1" y="0" width="12" height="1.3" fill="#6b6b6b"/><rect x="3" y="3" width="7" height="1.3" fill="#6b6b6b"/><rect x="1" y="6" width="12" height="1.3" fill="#6b6b6b"/><rect x="3" y="9" width="7" height="1.3" fill="#6b6b6b"/><rect x="1" y="12" width="12" height="1.3" fill="#6b6b6b"/></svg>
<svg style="left:288px;top:84px;" width="17" height="16" viewBox="0 0 17 16"><rect x="0.5" y="0.5" width="15" height="14" fill="#fff" stroke="#707070"/><path d="M2.5 3H7M9 3H13.5M2.5 5H5M6.5 5H9" stroke="#9a9a9a" stroke-width="0.8"/></svg>
<svg style="left:311px;top:91px;" width="8" height="5" viewBox="0 0 8 5"><path d="M0 0H7L3.5 4Z" fill="#3a3a3a"/></svg>
<svg style="left:330px;top:84px;" width="19" height="16" viewBox="0 0 19 16"><path d="M1 1.5H17M1 5.5H17M1 9.5H8M1 13.5H8" stroke="#6b6b6b" stroke-width="1.2"/><path d="M10 9.5H15.5A2 2 0 0 1 15.5 13.5H11" fill="none" stroke="#3a7fc0" stroke-width="1.3"/><path d="M10 13.5L12.5 11V16Z" fill="#3a7fc0"/></svg>
<svg style="left:355px;top:84px;" width="19" height="16" viewBox="0 0 19 16"><rect x="0.5" y="0.5" width="16" height="14" fill="#fff" stroke="#707070"/><path d="M8.5 0.5V4.5M8.5 10.5V14.5" stroke="#707070"/><rect x="0.5" y="4.5" width="16" height="6" fill="#fff" stroke="#3a7fc0"/></svg>
<svg style="left:381px;top:91px;" width="8" height="5" viewBox="0 0 8 5"><path d="M0 0H7L3.5 4Z" fill="#3a3a3a"/></svg>
<svg style="left:287px;top:109px;" width="18" height="18" viewBox="0 0 18 18"><text x="1" y="14" font-family="Liberation Sans" font-weight="bold" font-size="13" fill="#3d3d3d">T1</text><path d="M1 2.5H6M1 2.5L3 1M9 16.5H15M15 16.5L13 15" stroke="#3a7fc0" stroke-width="1.1" fill="none"/></svg>
<svg style="left:314px;top:112px;" width="14" height="16" viewBox="0 0 14 16"><rect x="1" y="0" width="12" height="1.3" fill="#6b6b6b"/><rect x="1" y="2" width="8" height="1.3" fill="#6b6b6b"/><rect x="1" y="4" width="12" height="1.3" fill="#6b6b6b"/><rect x="1" y="6" width="8" height="1.3" fill="#6b6b6b"/><rect x="1" y="8" width="12" height="1.3" fill="#6b6b6b"/></svg>
<svg style="left:339px;top:112px;" width="14" height="16" viewBox="0 0 14 16"><rect x="1" y="0" width="12" height="1.3" fill="#6b6b6b"/><rect x="3" y="2" width="8" height="1.3" fill="#6b6b6b"/><rect x="1" y="4" width="12" height="1.3" fill="#6b6b6b"/><rect x="3" y="6" width="8" height="1.3" fill="#6b6b6b"/><rect x="1" y="8" width="12" height="1.3" fill="#6b6b6b"/></svg>
<svg style="left:364px;top:112px;" width="14" height="16" viewBox="0 0 14 16"><rect x="1" y="0" width="12" height="1.3" fill="#6b6b6b"/><rect x="5" y="2" width="8" height="1.3" fill="#6b6b6b"/><rect x="1" y="4" width="12" height="1.3" fill="#6b6b6b"/><rect x="5" y="6" width="8" height="1.3" fill="#6b6b6b"/><rect x="1" y="8" width="12" height="1.3" fill="#6b6b6b"/></svg>
<svg style="left:389px;top:112px;" width="14" height="16" viewBox="0 0 14 16"><rect x="1" y="0" width="12" height="1.3" fill="#6b6b6b"/><rect x="1" y="2" width="12" height="1.3" fill="#6b6b6b"/><rect x="1" y="4" width="12" height="1.3" fill="#6b6b6b"/><rect x="1" y="6" width="12" height="1.3" fill="#6b6b6b"/><rect x="1" y="8" width="12" height="1.3" fill="#6b6b6b"/></svg>
<svg style="left:400px;top:141px;" width="10" height="10" viewBox="0 0 10 10"><path d="M9 0V9H0Z" fill="#8f8f8f"/></svg>
<div style="left:415px;top:62px;width:113px;height:21px;background:#fff;border:1px solid #a9bad3"></div>
<div class="t" style="left:419px;top:65.8px;font-size:12px;line-height:14px;color:#111">Custom</div>
<svg style="left:512px;top:70px;" width="11" height="7" viewBox="0 0 11 7"><path d="M1 1L5.5 5.5L10 1" fill="none" stroke="#444" stroke-width="1.1"/></svg>
<div class="t" style="left:420px;top:97.6px;font-size:14px;line-height:17px;color:#555">%</div>
<svg style="left:445px;top:96px;" width="20" height="19" viewBox="0 0 20 19"><rect x="1" y="1" width="12" height="9" fill="#5a9e2a"/><text x="3" y="9" font-family="Liberation Sans" font-weight="bold" font-size="8" fill="#fff">€</text><ellipse cx="14" cy="8" rx="4.5" ry="3" fill="#e9a24a" stroke="#c5782a"/><ellipse cx="14" cy="11" rx="4.5" ry="3" fill="#e9a24a" stroke="#c5782a"/><ellipse cx="8" cy="13" rx="4.5" ry="3" fill="#e9a24a" stroke="#c5782a"/><ellipse cx="8" cy="16" rx="4.5" ry="3" fill="#e9a24a" stroke="#c5782a"/></svg>
<div style="left:471px;top:93px;width:1px;height:23px;background:#c8c8c8"></div>
<svg style="left:480px;top:97px;" width="16" height="16" viewBox="0 0 16 16"><path d="M1 5L5 2V8Z" fill="#3a7fc0"/><path d="M4 5H8" stroke="#3a7fc0" stroke-width="2"/><text x="8.5" y="8" font-family="Liberation Sans" font-size="8.5" fill="#3d3d3d">0</text><text x="2" y="15" font-family="Liberation Sans" font-size="8.5" fill="#3d3d3d">.00</text></svg>
<svg style="left:505px;top:97px;" width="18" height="16" viewBox="0 0 18 16"><text x="4" y="8" font-family="Liberation Sans" font-size="8.5" fill="#3d3d3d">.00</text><path d="M7 12L3 9V15Z" fill="#3a7fc0" transform="translate(14,0) scale(-1,1) translate(-10,0)"/><path d="M1 12H5" stroke="#3a7fc0" stroke-width="2"/><path d="M8 12L5 9.5V14.5Z" fill="#3a7fc0"/><text x="9" y="15" font-family="Liberation Sans" font-size="8.5" fill="#3d3d3d">.0</text></svg>
<svg style="left:519px;top:141px;" width="10" height="10" viewBox="0 0 10 10"><path d="M9 0V9H0Z" fill="#8f8f8f"/></svg>
<svg style="left:550px;top:58px;" width="28" height="27" viewBox="0 0 28 27"><path d="M4 13L12 5L20 13L12 21Z" fill="#fff" stroke="#6a6a6a" stroke-width="1"/><circle cx="11" cy="4" r="2.3" fill="none" stroke="#6a6a6a"/><path d="M11 6V11" stroke="#6a6a6a"/><circle cx="11" cy="11" r="1.2" fill="none" stroke="#6a6a6a"/><path d="M14 4C20 5 25 10 21 21C21 15 19 9 14 6Z" fill="#3a7fc0"/></svg>
<div style="left:545px;top:86px;width:37px;height:7px;background:#fdf99b"></div>
<div class="t" style="left:523.0px;top:98.8px;width:80px;text-align:center;font-size:12px;line-height:14px;color:#262626">Shading</div>
<svg style="left:560px;top:119px;" width="8" height="5" viewBox="0 0 8 5"><path d="M0 0H7L3.5 4Z" fill="#3a3a3a"/></svg>
<svg style="left:606px;top:59px;" width="31" height="31" viewBox="0 0 31 31"><rect x="1.5" y="1.5" width="28" height="28" fill="#fff" stroke="#6a6a6a" stroke-width="1.2"/><path d="M15.5 2V29M2 15.5H29" stroke="#9a9a9a" stroke-width="1"/></svg>
<div class="t" style="left:582.0px;top:98.8px;width:80px;text-align:center;font-size:12px;line-height:14px;color:#262626">Borders</div>
<svg style="left:619px;top:119px;" width="8" height="5" viewBox="0 0 8 5"><path d="M0 0H7L3.5 4Z" fill="#3a3a3a"/></svg>
<svg style="left:678px;top:59px;" width="34" height="33" viewBox="0 0 34 33"><rect x="1.5" y="1.5" width="29" height="24" fill="#fff" stroke="#757575"/><path d="M1.5 7.5H30.5M1.5 13.5H30.5M1.5 19.5H30.5M8.5 1.5V25.5M22.5 1.5V25.5" stroke="#9a9a9a" stroke-width="1"/><rect x="9" y="2" width="9" height="5" fill="#c3dd2a"/><rect x="9" y="8" width="12" height="5" fill="#86aef0"/><rect x="9" y="14" width="10" height="5" fill="#c3dd2a"/><rect x="9" y="20" width="7" height="5" fill="#86aef0"/><rect x="17.5" y="18.5" width="15" height="12" fill="#fff" stroke="#666"/><path d="M23 20L20 21.7L23 23.4M20 25H23.5M20 27H23.5M20 28.6H23.5M25.5 24.5L28.5 26.3L25.5 28.1" fill="none" stroke="#333" stroke-width="0.9"/></svg>
<div class="t" style="left:649.0px;top:98.8px;width:90px;text-align:center;font-size:12px;line-height:14px;color:#262626">Conditional</div>
<div class="t" style="left:641.0px;top:113.8px;width:90px;text-align:center;font-size:12px;line-height:14px;color:#262626">formatting</div>
<svg style="left:723px;top:119px;" width="8" height="5" viewBox="0 0 8 5"><path d="M0 0H7L3.5 4Z" fill="#3a3a3a"/></svg>
<svg style="left:751px;top:61px;" width="36" height="33" viewBox="0 0 36 33"><rect x="1.5" y="1.5" width="28" height="25" fill="#fff" stroke="#757575"/><path d="M1.5 11.5H29.5M1.5 16.5H29.5M1.5 21.5H29.5M8.5 6.5V26.5M15.5 6.5V26.5M22.5 6.5V26.5" stroke="#a0a0a0"/><rect x="1.5" y="1.5" width="28" height="5" fill="#86aef0" stroke="#3a7fc0"/><rect x="8.5" y="11.5" width="7" height="5" fill="#b8d0f5" stroke="#3a7fc0"/><path d="M34 9L34 14L27 21L24 18Z" fill="#bdbdbd"/><path d="M12 29C14 24 19 19.5 24.5 18L27.5 21C25 26 19 29 12 29Z" fill="#86aef0"/></svg>
<div class="t" style="left:736.0px;top:98.8px;width:60px;text-align:center;font-size:12px;line-height:14px;color:#262626">Cell</div>
<div class="t" style="left:730.0px;top:113.8px;width:60px;text-align:center;font-size:12px;line-height:14px;color:#262626">styles</div>
<svg style="left:779px;top:119px;" width="8" height="5" viewBox="0 0 8 5"><path d="M0 0H7L3.5 4Z" fill="#3a3a3a"/></svg>
<svg style="left:813px;top:59px;" width="34" height="33" viewBox="0 0 34 33"><rect x="1.5" y="1.5" width="15" height="9" fill="#fff" stroke="#757575"/><path d="M6.5 1V11M11.5 1V11M1 6H17" stroke="#9a9a9a"/><rect x="1.5" y="22.5" width="15" height="9" fill="#fff" stroke="#757575"/><path d="M6.5 22V32M11.5 22V32M1 27H17" stroke="#9a9a9a"/><rect x="12.5" y="11.5" width="19" height="6" fill="#dce9f7" stroke="#3a7fc0"/><path d="M17.5 12V17M22.5 12V17M27.5 12V17" stroke="#9dbde0"/><path d="M3 14.5L7 11.5V17.5Z" fill="#3a7fc0"/><path d="M6 14.5H10" stroke="#3a7fc0" stroke-width="2"/></svg>
<div class="t" style="left:798.0px;top:98.8px;width:60px;text-align:center;font-size:12px;line-height:14px;color:#262626">Insert</div>
<svg style="left:826px;top:119px;" width="8" height="5" viewBox="0 0 8 5"><path d="M0 0H7L3.5 4Z" fill="#3a3a3a"/></svg>
<svg style="left:866px;top:59px;" width="36" height="33" viewBox="0 0 36 33"><rect x="1.5" y="1.5" width="15" height="9" fill="#fff" stroke="#757575"/><path d="M6.5 1V11M11.5 1V11M1 6H17" stroke="#9a9a9a"/><rect x="1.5" y="22.5" width="15" height="9" fill="#fff" stroke="#757575"/><path d="M6.5 22V32M11.5 22V32M1 27H17" stroke="#9a9a9a"/><rect x="12.5" y="11.5" width="12" height="6" fill="#f4c9c9" stroke="#d05050"/><path d="M3 14.5H8" stroke="#c62828" stroke-width="2"/><path d="M10 14.5L6.5 11.5V17.5Z" fill="#c62828"/><path d="M23 10C26 13 30 17 33 20M32 10C28 13 26 17 24 21" stroke="#c62828" stroke-width="2.3" fill="none"/></svg>
<div class="t" style="left:851.0px;top:98.8px;width:60px;text-align:center;font-size:12px;line-height:14px;color:#262626">Delete</div>
<svg style="left:879px;top:119px;" width="8" height="5" viewBox="0 0 8 5"><path d="M0 0H7L3.5 4Z" fill="#3a3a3a"/></svg>
<svg style="left:921px;top:62px;" width="36" height="27" viewBox="0 0 36 27"><path d="M0 3.5H34M0 21.5H34M3.5 0V25M30.5 0V25" stroke="#a8a8a8"/><rect x="4" y="4" width="26" height="17" fill="#fff"/><path d="M7 12.5C12 5 22 5 27 12.5C22 19 12 19 7 12.5Z" fill="none" stroke="#3a7fc0" stroke-width="1.3"/><circle cx="17" cy="12.5" r="3" fill="#3a7fc0"/><path d="M6 19L28 6" stroke="#e03030" stroke-width="1.3"/></svg>
<div class="t" style="left:904.0px;top:98.8px;width:70px;text-align:center;font-size:12px;line-height:14px;color:#262626">Visibility</div>
<svg style="left:936px;top:119px;" width="8" height="5" viewBox="0 0 8 5"><path d="M0 0H7L3.5 4Z" fill="#3a3a3a"/></svg>
<svg style="left:990px;top:60px;" width="32" height="31" viewBox="0 0 32 31"><text x="1" y="14" font-family="Liberation Sans" font-weight="bold" font-size="15" fill="#3a7fc0">A</text><text x="2" y="29" font-family="Liberation Sans" font-weight="bold" font-size="14" fill="#3ea040">Z</text><path d="M15 10H30L24 17V25L21 23V17Z" fill="#7a7a7a"/><path d="M15 8H30" stroke="#9a9a9a"/></svg>
<div class="t" style="left:971.0px;top:98.8px;width:70px;text-align:center;font-size:12px;line-height:14px;color:#262626">Sort and</div>
<div class="t" style="left:966.0px;top:113.8px;width:70px;text-align:center;font-size:12px;line-height:14px;color:#262626">filter</div>
<svg style="left:1016px;top:119px;" width="8" height="5" viewBox="0 0 8 5"><path d="M0 0H7L3.5 4Z" fill="#3a3a3a"/></svg>
<div class="t" style="left:1043px;top:57.8px;font-size:15px;line-height:18px;color:#4a4a8a">Σ</div>
<div class="t" style="left:1063px;top:58.8px;font-size:12px;line-height:14px;color:#262626">Autosum</div>
<svg style="left:1119px;top:64px;" width="8" height="5" viewBox="0 0 8 5"><path d="M0 0H7L3.5 4Z" fill="#3a3a3a"/></svg>
<svg style="left:1041px;top:83px;" width="19" height="18" viewBox="0 0 19 18"><rect x="0.5" y="0.5" width="13" height="13" fill="#fff" stroke="#6f6f6f"/><path d="M0.5 5H13.5M0.5 9.5H13.5" stroke="#bdbdbd"/><path d="M12.5 6V14" stroke="#3a7fc0" stroke-width="2.5"/><path d="M8.5 13L12.5 17.5L16.5 13Z" fill="#3a7fc0"/></svg>
<div class="t" style="left:1063px;top:83.8px;font-size:12px;line-height:14px;color:#262626">Fill</div>
<svg style="left:1084px;top:89px;" width="8" height="5" viewBox="0 0 8 5"><path d="M0 0H7L3.5 4Z" fill="#3a3a3a"/></svg>
<svg style="left:1040px;top:107px;" width="19" height="19" viewBox="0 0 19 19"><path d="M2 12L10 4L16 10L9 17L4 16Z" fill="#fff" stroke="#a0a0a0"/><path d="M7 7L10 4L16 10L13 13Z" fill="#f4a7b0"/><path d="M5 18H18" stroke="#8a8a8a"/></svg>
<div class="t" style="left:1063px;top:108.8px;font-size:12px;line-height:14px;color:#262626">Delete</div>
<svg style="left:1102px;top:114px;" width="8" height="5" viewBox="0 0 8 5"><path d="M0 0H7L3.5 4Z" fill="#3a3a3a"/></svg>
<svg style="left:1148px;top:58px;" width="32" height="33" viewBox="0 0 32 33"><circle cx="12" cy="11" r="9" fill="#fff" stroke="#8a8a8a" stroke-width="1.8"/><path d="M18.5 18L28 29" stroke="#86aef0" stroke-width="3.2" stroke-linecap="round"/></svg>
<div class="t" style="left:1133.0px;top:98.8px;width:60px;text-align:center;font-size:12px;line-height:14px;color:#262626">Search</div>
<div class="t" style="left:1193px;top:59.7px;font-size:11px;line-height:13px;color:#555">a</div>
<svg style="left:1200px;top:63px;" width="7" height="7" viewBox="0 0 7 7"><path d="M0 3.5H4" stroke="#3a7fc0" stroke-width="1.3"/><path d="M6 3.5L3 1V6Z" fill="#3a7fc0"/></svg>
<div class="t" style="left:1205px;top:59.7px;font-size:11px;line-height:13px;color:#555">b</div>
<div class="t" style="left:1217px;top:58.8px;font-size:12px;line-height:14px;color:#262626">Replace</div>
<svg style="left:1195px;top:83px;" width="16" height="15" viewBox="0 0 16 15"><circle cx="6" cy="6" r="4.8" fill="none" stroke="#777" stroke-width="1.1"/><path d="M9 9L14 14" stroke="#86aef0" stroke-width="1.8"/><path d="M8 2L12 2L10 6Z" fill="#3a7fc0"/></svg>
<div class="t" style="left:1217px;top:83.8px;font-size:12px;line-height:14px;color:#262626">Search again</div>
<svg style="left:1195px;top:111px;" width="15" height="11" viewBox="0 0 15 11"><path d="M0.5 3V7M2.5 3V7" stroke="#3a7fc0"/><path d="M4 5H9" stroke="#3a7fc0" stroke-width="3"/><path d="M8 0.5L13.5 5L8 9.5Z" fill="#3a7fc0"/></svg>
<div class="t" style="left:1217px;top:108.8px;font-size:12px;line-height:14px;color:#262626">Go to</div>
<svg style="left:1304px;top:59px;" width="32" height="32" viewBox="0 0 32 32"><rect x="1.5" y="1.5" width="24" height="19" fill="none" stroke="#3a7fc0" stroke-dasharray="2 2"/><path d="M17.5 11.5V29.5L21.5 25L29.5 24.5Z" fill="#fff" stroke="#7a7a7a"/></svg>
<div class="t" style="left:1290.0px;top:98.8px;width:60px;text-align:center;font-size:12px;line-height:14px;color:#262626">Select</div>
<div class="t" style="left:1290.0px;top:113.8px;width:60px;text-align:center;font-size:12px;line-height:14px;color:#262626">all</div>
<div style="left:12px;top:190px;width:12px;height:2px;background:#6b6b6b"></div>
<div style="left:12px;top:194px;width:12px;height:2px;background:#6b6b6b"></div>
<div style="left:12px;top:198px;width:12px;height:2px;background:#6b6b6b"></div>
<div style="left:34px;top:186px;width:1px;height:19px;background:#cdcdcd"></div>
<div style="left:65px;top:186px;width:1px;height:19px;background:#cdcdcd"></div>
<div style="left:153px;top:186px;width:1px;height:19px;background:#cdcdcd"></div>
<div style="left:184px;top:186px;width:1px;height:19px;background:#cdcdcd"></div>
<div style="left:295px;top:186px;width:1px;height:19px;background:#cdcdcd"></div>
<svg style="left:42px;top:185px;" width="15" height="19" viewBox="0 0 15 19"><circle cx="5.5" cy="5" r="3.4" fill="none" stroke="#9cc0fa" stroke-width="1.7"/><path d="M4 5.5C4 4 6.5 4 6.5 5.5V9C6.5 8 8.5 8 8.5 9V9.5C8.5 8.7 10.5 8.7 10.5 9.8V10.3C10.5 9.5 12.5 9.5 12.5 10.5V13C12.5 15.5 11 17.5 8.5 17.5H7.5C5.5 17.5 4.8 16.5 3.5 14.8L1.5 12C0.8 11 2 10 3 10.8L4 11.8Z" fill="#fff" stroke="#6b6b6b" stroke-width="1"/><path d="M6.5 9V12M8.5 9.5V12M10.5 10.3V12.5" stroke="#6b6b6b" stroke-width="0.8"/></svg>
<svg style="left:74px;top:187px;" width="13" height="16" viewBox="0 0 13 16"><path d="M0.5 0.5H8.5L12.5 4.5V16.5H0.5Z" fill="#fff" stroke="#6f6f6f"/><path d="M8.5 0.5V4.5H12.5" fill="none" stroke="#6f6f6f"/></svg>
<svg style="left:96px;top:194px;" width="8" height="5" viewBox="0 0 8 5"><path d="M0 0H7L3.5 4Z" fill="#3a3a3a"/></svg>
<svg style="left:112px;top:189px;" width="18" height="15" viewBox="0 0 18 15"><path d="M0.5 13.5V1.5Q0.5 0.5 1.5 0.5H5.5L7 2H13.5V5.5" fill="#fde3a6" stroke="#d09a50"/><path d="M0.5 13.5L3 6.5H16.5L13.5 13.5Z" fill="#fde3a6" stroke="#d09a50"/></svg>
<svg style="left:137px;top:194px;" width="8" height="5" viewBox="0 0 8 5"><path d="M0 0H7L3.5 4Z" fill="#3a3a3a"/></svg>
<svg style="left:160px;top:187px;" width="16" height="16" viewBox="0 0 16 16"><path d="M0.5 0.5H15.5V15.5H2.5L0.5 13.5Z" fill="#86aef0" stroke="#555"/><rect x="3.5" y="0.5" width="9" height="6" fill="#eef3fb" stroke="#555"/><rect x="4.5" y="11.5" width="7" height="4" fill="#fff" stroke="#555"/></svg>
<svg style="left:190px;top:187px;" width="16" height="16" viewBox="0 0 16 16"><path d="M3 6C6 1 13 1 14.5 7C15 10 14 13 12 14.5" fill="none" stroke="#c4c4c4" stroke-width="2.2"/><path d="M0 2V9H7Z" fill="#c4c4c4"/></svg>
<svg style="left:214px;top:193px;" width="8" height="5" viewBox="0 0 8 5"><path d="M0 0H7L3.5 4Z" fill="#3a3a3a"/></svg>
<svg style="left:230px;top:187px;" width="16" height="16" viewBox="0 0 16 16"><path d="M13 6C10 1 3 1 1.5 7C1 10 2 13 4 14.5" fill="none" stroke="#c4c4c4" stroke-width="2.2"/><path d="M16 2V9H9Z" fill="#c4c4c4"/></svg>
<svg style="left:254px;top:193px;" width="8" height="5" viewBox="0 0 8 5"><path d="M0 0H7L3.5 4Z" fill="#3a3a3a"/></svg>
<svg style="left:271px;top:187px;" width="16" height="16" viewBox="0 0 16 16"><path d="M13 6C10 1 3 1 1.5 7C1 10 2 13 4 14.5" fill="none" stroke="#c4c4c4" stroke-width="2.2"/><path d="M16 2V9H9Z" fill="#c4c4c4"/></svg>
<svg style="left:304px;top:187px;" width="12" height="17" viewBox="0 0 12 17"><path d="M0.5 0.5V14L4 11L7 16.5L9 15.5L6.5 10.5H11Z" fill="#fff" stroke="#6a6a6a"/></svg>
<div class="t" style="left:323px;top:181.8px;font-size:15px;line-height:18px;color:#666">»</div>
<div class="t" style="left:1339px;top:154.5px;font-size:13px;line-height:16px;color:#666">»</div>
<div class="t" style="left:1343px;top:701.5px;font-size:13px;line-height:16px;color:#666">»</div>
<svg style="left:407px;top:739px;" width="18" height="18" viewBox="0 0 18 18"><circle cx="9" cy="9" r="7.3" fill="none" stroke="#fff" stroke-width="2"/></svg>
<svg style="left:454px;top:739px;" width="19" height="18" viewBox="0 0 19 18"><rect x="2.5" y="3.5" width="10" height="10" fill="none" stroke="#fff" stroke-width="1.3"/><path d="M0 1.5H15M0 15.5H15" stroke="#fff" stroke-width="1.3"/><rect x="15.5" y="4" width="2" height="3" fill="#fff"/><path d="M16.5 9V15" stroke="#fff" stroke-width="1.3"/></svg>
<svg style="left:503px;top:738px;" width="23" height="19" viewBox="0 0 23 19"><path d="M0.5 1.5H8L10 4H21.5V18.5H0.5Z" fill="#f2c04a"/><path d="M0.5 6H21.5V18.5H0.5Z" fill="#fde08a"/><rect x="6" y="10" width="10" height="8" fill="#3b8ee0"/><rect x="9" y="13" width="4" height="5" fill="#fde08a"/></svg>
<div style="left:495px;top:766px;width:40px;height:2px;background:#76b9ed"></div>
<svg style="left:552px;top:736px;" width="24" height="23" viewBox="0 0 24 23"><path d="M8 7V4A4 4 0 0 1 16 4V7" fill="none" stroke="#fff" stroke-width="1.5"/><rect x="1" y="7" width="22" height="16" rx="2" fill="#fff"/><rect x="7" y="10" width="4.5" height="4.5" fill="#f35325"/><rect x="12.5" y="10" width="4.5" height="4.5" fill="#81bc06"/><rect x="7" y="15.5" width="4.5" height="4.5" fill="#05a6f0"/><rect x="12.5" y="15.5" width="4.5" height="4.5" fill="#ffba08"/></svg>
<svg style="left:600px;top:738px;" width="25" height="19" viewBox="0 0 25 19"><path d="M0.5 7L12.5 0.5L24.5 7V18.5H0.5Z" fill="#fff"/><path d="M1 7L12.5 13L24 7" fill="none" stroke="#1f3441" stroke-width="1.5"/><path d="M14 13L20 18" stroke="#1f3441" stroke-width="1.5"/></svg>
<svg style="left:650px;top:736px;" width="24" height="23" viewBox="0 0 24 23"><path d="M21 12H7C7 16 10 18.5 14 18.5C17 18.5 19.5 17.5 21 16.5V20.5C19 21.5 16.5 22 13.5 22C7 22 3 18 3 12C3 6 7.5 2 13 2C18.5 2 21.5 6 21.5 10.5Z M7.5 9H17C17 6.5 15 5.2 12.5 5.2C10 5.2 8 6.5 7.5 9Z" fill="#1aa0e8"/><path d="M2 19C0 15 4 6 14 3C21 1 24 4 22 8" fill="none" stroke="#f7b500" stroke-width="1.6"/></svg>
<svg style="left:699px;top:736px;" width="24" height="24" viewBox="0 0 24 24"><circle cx="12" cy="12" r="11" fill="#7a3fc9"/><path d="M12 1C18 1 23 6 23 12C23 18 18 23 12 23C6 23 1 18 1 12C1 9 2 7 3 5C3 8 5 9 6 9C6 6 9 3 11 3C9 5 10 7 12 7C15 7 17 10 17 13C17 16 14 18 11 18C8 18 6 16 6 13C5 16 7 20 12 20C17 20 20 16 20 12C20 7 17 3 12 1Z" fill="#ff7b1a"/><path d="M3 5C5 1 9 0 12 1C9 2 8 3 8 4Z" fill="#ffcb2a"/></svg>
<svg style="left:748px;top:736px;" width="24" height="24" viewBox="0 0 24 24"><circle cx="12" cy="12" r="11" fill="#db4437"/><path d="M12 12L21.5 6.5A11 11 0 0 1 12 23Z" fill="#f4c20d"/><path d="M12 12L12 23A11 11 0 0 1 2.5 6.5Z" fill="#0f9d58"/><path d="M12 12L2.5 6.5A11 11 0 0 1 21.5 6.5Z" fill="#db4437"/><circle cx="12" cy="12" r="5" fill="#fff"/><circle cx="12" cy="12" r="3.8" fill="#4285f4"/></svg>
<div style="left:740px;top:766px;width:40px;height:2px;background:#76b9ed"></div>
<svg style="left:797px;top:736px;" width="25" height="25" viewBox="0 0 25 25"><circle cx="12.5" cy="12.5" r="12" fill="#15c39a"/><path d="M17.5 8.5A6.5 6.5 0 1 0 19 13.5H13.5" fill="none" stroke="#fff" stroke-width="2.2"/><path d="M19 13.5V18" stroke="#fff" stroke-width="2"/></svg>
<svg style="left:846px;top:736px;" width="23" height="24" viewBox="0 0 23 24"><circle cx="11.5" cy="12" r="11" fill="#2e9a2e"/><circle cx="11.5" cy="10" r="8" fill="#4cbf3a" opacity="0.6"/><text x="3" y="16" font-family="Liberation Sans" font-weight="bold" font-size="10" fill="#fff">glo</text></svg>
<div style="left:838px;top:766px;width:40px;height:2px;background:#76b9ed"></div>
<div style="left:883px;top:728px;width:48px;height:40px;background:#4a5966"></div>
<div style="left:883px;top:766px;width:48px;height:2px;background:#76b9ed"></div>
<svg style="left:894px;top:736px;" width="26" height="25" viewBox="0 0 26 25"><rect x="0.5" y="0.5" width="24" height="24" fill="#3d9a36" stroke="#2c7a28"/><rect x="2.5" y="2.5" width="20" height="20" fill="none" stroke="#9fd39a" stroke-width="0.8"/><text x="6" y="19" font-family="Liberation Sans" font-weight="bold" font-size="16" fill="#fff">P</text><path d="M12 0.5L24.5 13V6L19 0.5Z" fill="#3d6fd0"/><rect x="3" y="19" width="2.5" height="2.5" fill="#fff"/></svg>
<svg style="left:1134px;top:743px;" width="14" height="9" viewBox="0 0 14 9"><path d="M1 8L7 2L13 8" fill="none" stroke="#fff" stroke-width="1.3"/></svg>
<svg style="left:1156px;top:741px;" width="17" height="16" viewBox="0 0 17 16"><path d="M4 0.5L8.5 3.5L4 6.5L-0.5 3.5Z M12.5 0.5L17 3.5L12.5 6.5L8 3.5Z M4 6.5L8.5 9.5L4 12.5L-0.5 9.5Z M12.5 6.5L17 9.5L12.5 12.5L8 9.5Z M4.5 13.5L8.5 11L12.5 13.5L8.5 16Z" fill="#fff"/></svg>
<svg style="left:1180px;top:741px;" width="18" height="15" viewBox="0 0 18 15"><path d="M3 1V4M6 1V4M1.5 4H7.5V7A3 3 0 0 1 1.5 7Z M4.5 10V15" fill="none" stroke="#fff" stroke-width="1.2"/><rect x="8.5" y="5.5" width="8" height="7" fill="none" stroke="#fff"/><rect x="9.5" y="6.5" width="4" height="5" fill="#fff"/><rect x="17" y="7.5" width="1" height="3" fill="#fff"/></svg>
<svg style="left:1205px;top:741px;" width="16" height="15" viewBox="0 0 16 15"><rect x="0" y="12" width="2" height="3" fill="#fff"/><rect x="3.5" y="10" width="2" height="5" fill="#fff"/><rect x="7" y="7" width="2" height="8" fill="#fff"/><rect x="10.5" y="4" width="2" height="11" fill="#fff"/><rect x="14" y="1" width="2" height="14" fill="#fff"/></svg>
<svg style="left:1228px;top:740px;" width="19" height="17" viewBox="0 0 19 17"><path d="M0.5 5.5H4L8.5 1V16L4 11.5H0.5Z" fill="none" stroke="#fff" stroke-width="1.1"/><path d="M11 5C12.5 7 12.5 10 11 12M13.5 3C16 6 16 11 13.5 14M16 1C19.5 5 19.5 12 16 16" fill="none" stroke="#fff" stroke-width="1.1"/></svg>
<div class="t" style="left:1260px;top:732.3px;font-size:12px;line-height:14px;color:#fff">5:50 PM</div>
<div class="t" style="left:1256px;top:749.8px;font-size:12px;line-height:14px;color:#fff">10/9/2019</div>
<svg style="left:1323px;top:740px;" width="26" height="26" viewBox="0 0 26 26"><path d="M1.5 1.5H17.5V12.5H9L5 16V12.5H1.5Z" fill="#fff"/><path d="M4 5H15M4 7.5H15M4 10H12" stroke="#1b2a3e" stroke-width="1"/><circle cx="17" cy="16" r="8" fill="#3b3b3b" stroke="#555"/><text x="14" y="20.5" font-family="Liberation Sans" font-weight="bold" font-size="11" fill="#fff">1</text></svg>
<div style="left:1362px;top:728px;width:1px;height:40px;background:#4a5a6a"></div>
<div class="t" style="left:1074px;top:650px;font-size:19.7px;line-height:22px;color:rgba(140,140,140,0.55)">Activate Windows</div>
<div class="t" style="left:1074px;top:676px;font-size:15px;line-height:17px;color:rgba(140,140,140,0.55)">Go to Settings to activate Windows.</div>
</body></html>
